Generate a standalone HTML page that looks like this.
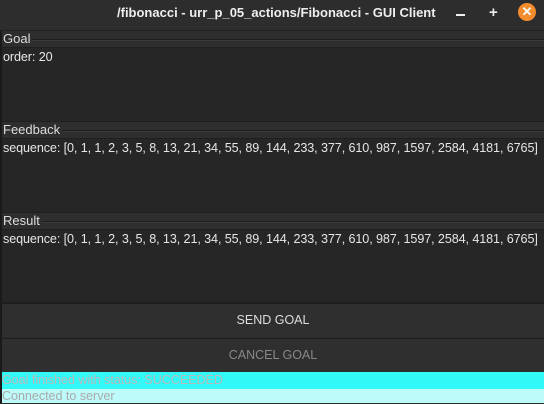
<!DOCTYPE html>
<html><head><style>
body{margin:0;width:544px;height:403px;background:#2b2b2b;font-family:"Liberation Sans",sans-serif;overflow:hidden;position:relative;color:#ddd}
.abs{position:absolute}
.title{left:0;top:0;width:544px;height:30px;background:#2d2d2d;border-bottom:1px solid #222}
.title .t{left:117px;top:5px;font-size:13px;font-weight:bold;color:#eee;letter-spacing:0px}
.lab{left:2px;width:542px;height:17px;background:#2e2e2e}
.lab span{position:absolute;left:1px;top:0;font-size:13px;color:#ddd;background:#2e2e2e;padding-right:2px}
.lab .ln{position:absolute;left:0;right:0;top:8px;border-top:1px solid #1e1e1e;border-bottom:1px solid #3a3a3a}
.ta{left:2px;width:542px;background:#262626;border-top:1px solid #1f1f1f;border-bottom:1px solid #1f1f1f}
.ta span{position:absolute;left:1px;top:2px;font-size:12.6px;color:#e6e6e6;white-space:nowrap;letter-spacing:-0.1px}
.btn{left:2px;width:542px;height:33px;background:#2f2f2f;border-top:1px solid #1d1d1d;text-align:center;line-height:33px;font-size:12.5px}
</style></head><body>
<div class="abs" style="left:0;top:30px;width:2px;height:373px;background:#1a1a1a"></div>
<div class="abs title"><div class="abs t">/fibonacci - urr_p_05_actions/Fibonacci - GUI Client</div>
<div class="abs" style="left:456px;top:14px;width:9px;height:2px;background:#eee"></div>
<div class="abs" style="left:489px;top:4px;font-size:15px;font-weight:bold;color:#eee">+</div>
<div class="abs" style="left:518px;top:3px;width:18px;height:18px;border-radius:50%;background:#f28c2c;color:#fff;font-size:13px;font-weight:bold;text-align:center;line-height:18px">✕</div>
</div>
<div class="abs lab" style="top:31px"><div class="ln"></div><span>Goal</span></div>
<div class="abs ta" style="top:47px;height:73px"><span>order: 20</span></div>
<div class="abs lab" style="top:122px"><div class="ln"></div><span>Feedback</span></div>
<div class="abs ta" style="top:138px;height:73px"><span>sequence: [0, 1, 1, 2, 3, 5, 8, 13, 21, 34, 55, 89, 144, 233, 377, 610, 987, 1597, 2584, 4181, 6765]</span></div>
<div class="abs lab" style="top:213px"><div class="ln"></div><span>Result</span></div>
<div class="abs ta" style="top:229px;height:72px"><span>sequence: [0, 1, 1, 2, 3, 5, 8, 13, 21, 34, 55, 89, 144, 233, 377, 610, 987, 1597, 2584, 4181, 6765]</span></div>
<div class="abs btn" style="top:303px;color:#ddd">SEND GOAL</div>
<div class="abs btn" style="top:338px;color:#888">CANCEL GOAL</div>
<div class="abs" style="left:2px;top:372px;width:542px;height:17px;background:#33f8f8;color:#b8b8b8;font-size:12.5px;line-height:17px">Goal finished with status: SUCCEEDED</div>
<div class="abs" style="left:2px;top:389px;width:542px;height:14px;background:#bdfbfb;color:#aaa;font-size:12.5px;line-height:15px">Connected to server</div>
</body></html>
